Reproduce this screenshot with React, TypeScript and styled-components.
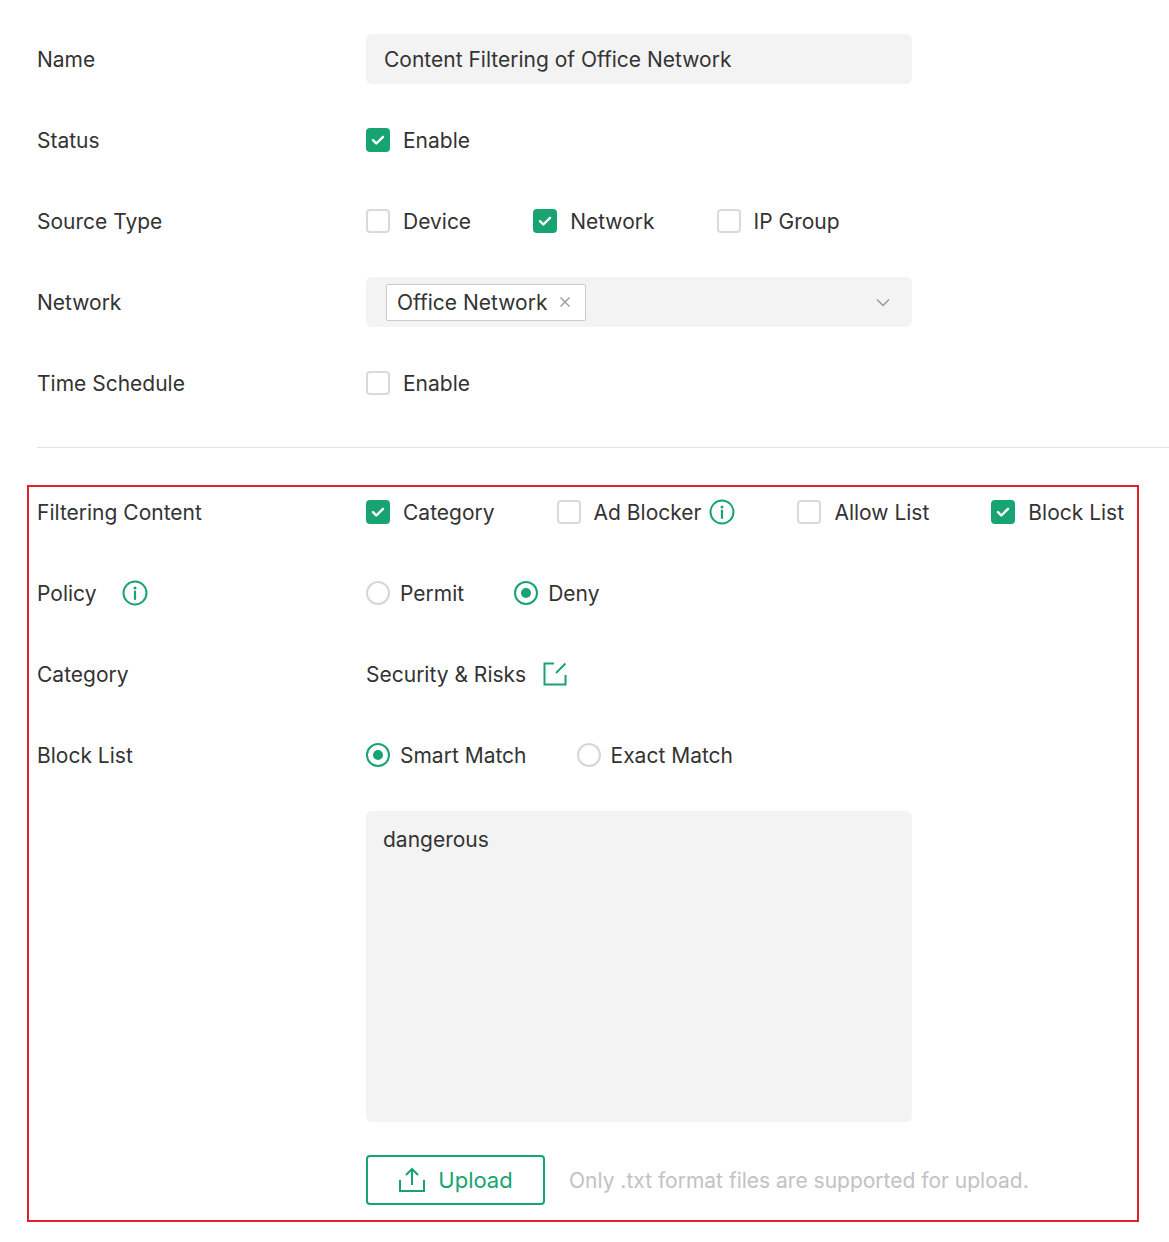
import React from "react";
import styled, { createGlobalStyle } from "styled-components";

const GREEN = "#18a470";

const Global = createGlobalStyle`
  body { margin: 0; background: #fff; font-family: Inter, "Noto Sans", sans-serif; color: #333; }
`;

const Page = styled.div`
  width: 1169px;
  padding-top: 34px;
  padding-bottom: 20px;
`;

const Rows = styled.div`
  display: flex;
  flex-direction: column;
  gap: 31px;
  padding-left: 37px;
`;

const Row = styled.div`
  display: grid;
  grid-template-columns: 329px 1fr;
  align-items: center;
  min-height: 50px;
`;

const Label = styled.div`
  font-size: 21px;
  display: flex;
  align-items: center;
  gap: 26px;
`;

const Controls = styled.div<{ $gap?: number }>`
  display: flex;
  align-items: center;
  gap: ${(p) => p.$gap ?? 62}px;
`;

const Input = styled.div`
  width: 546px;
  height: 50px;
  box-sizing: border-box;
  background: #f3f3f3;
  border-radius: 6px;
  padding: 0 18px;
  display: flex;
  align-items: center;
  font-size: 21px;
`;

const Select = styled(Input)`
  padding: 0 20px;
  justify-content: space-between;
`;

const Tag = styled.div`
  height: 37px;
  box-sizing: border-box;
  border: 1px solid #ccc;
  background: #fff;
  border-radius: 2px;
  display: flex;
  align-items: center;
  gap: 12px;
  padding: 0 14px 0 10px;
`;

const Option = styled.label`
  display: flex;
  align-items: center;
  gap: 13px;
  font-size: 21px;
`;

const Radio = styled.span<{ $on?: boolean }>`
  width: 24px;
  height: 24px;
  box-sizing: border-box;
  border-radius: 50%;
  border: 2px solid ${(p) => (p.$on ? GREEN : "#d6d6d6")};
  display: flex;
  align-items: center;
  justify-content: center;
  margin-right: -3px;
  &::after {
    content: "";
    width: 10px;
    height: 10px;
    border-radius: 50%;
    background: ${(p) => (p.$on ? GREEN : "transparent")};
  }
`;

const Box = styled.span<{ $on?: boolean }>`
  width: 24px;
  height: 24px;
  box-sizing: border-box;
  border-radius: 4px;
  background: ${(p) => (p.$on ? GREEN : "#fff")};
  border: ${(p) => (p.$on ? "none" : "2px solid #dadada")};
  display: flex;
  align-items: center;
  justify-content: center;
`;

const Divider = styled.hr`
  margin: 39px 0 37px 37px;
  border: none;
  border-top: 1px solid #e3e3e3;
`;

const Framed = styled.div`
  margin-left: 27px;
  width: 1112px;
  box-sizing: border-box;
  border: 2px solid #e0202a;
  padding: 0 0 15px 8px;
  display: flex;
  flex-direction: column;
  gap: 31px;
`;

const Indented = styled.div`
  padding-left: 329px;
`;

const TextArea = styled.div`
  width: 546px;
  height: 311px;
  box-sizing: border-box;
  background: #f3f3f3;
  border-radius: 6px;
  padding: 16px 17px;
  font-size: 21px;
`;

const UploadRow = styled.div`
  padding-left: 329px;
  margin-top: 2px;
  display: flex;
  align-items: center;
  gap: 24px;
`;

const UploadButton = styled.button`
  width: 179px;
  height: 50px;
  border: 2px solid ${GREEN};
  border-radius: 4px;
  background: #fff;
  color: ${GREEN};
  font-family: inherit;
  font-size: 22px;
  display: flex;
  align-items: center;
  justify-content: center;
  gap: 12px;
`;

const Hint = styled.span`
  color: #c2c2c2;
  font-size: 21px;
`;

const Check = ({ on }: { on?: boolean }) => (
  <Box $on={on}>
    {on && (
      <svg width="16" height="16" viewBox="0 0 16 16">
        <path d="M3 8.2l3.3 3.3L13 4.8" fill="none" stroke="#fff" strokeWidth="2.4" strokeLinecap="round" strokeLinejoin="round" />
      </svg>
    )}
  </Box>
);

const Info = () => (
  <svg width="26" height="26" viewBox="0 0 26 26">
    <circle cx="13" cy="13" r="11.5" fill="none" stroke={GREEN} strokeWidth="2" />
    <circle cx="13" cy="8" r="1.5" fill={GREEN} />
    <path d="M13 11.5v7.5" stroke={GREEN} strokeWidth="2.2" strokeLinecap="round" />
  </svg>
);

export default function App() {
  return (
    <Page>
      <Global />
      <Rows>
        <Row>
          <Label>Name</Label>
          <Input>Content Filtering of Office Network</Input>
        </Row>
        <Row>
          <Label>Status</Label>
          <Controls>
            <Option><Check on />Enable</Option>
          </Controls>
        </Row>
        <Row>
          <Label>Source Type</Label>
          <Controls>
            <Option><Check />Device</Option>
            <Option><Check on />Network</Option>
            <Option><Check />IP Group</Option>
          </Controls>
        </Row>
        <Row>
          <Label>Network</Label>
          <Select>
            <Tag>
              Office Network
              <svg width="12" height="12" viewBox="0 0 12 12">
                <path d="M1.5 1.5l9 9M10.5 1.5l-9 9" stroke="#999" strokeWidth="1.4" />
              </svg>
            </Tag>
            <svg width="18" height="18" viewBox="0 0 18 18">
              <path d="M3 6.5l6 6 6-6" fill="none" stroke="#999" strokeWidth="1.5" />
            </svg>
          </Select>
        </Row>
        <Row>
          <Label>Time Schedule</Label>
          <Controls>
            <Option><Check />Enable</Option>
          </Controls>
        </Row>
      </Rows>
      <Divider />
      <Framed>
        <Row>
          <Label>Filtering Content</Label>
          <Controls>
            <Option><Check on />Category</Option>
            <Option><Check />Ad Blocker<span style={{ marginLeft: -5, display: "flex" }}><Info /></span></Option>
            <Option><Check />Allow List</Option>
            <Option><Check on />Block List</Option>
          </Controls>
        </Row>
        <Row>
          <Label>Policy<Info /></Label>
          <Controls $gap={50}>
            <Option><Radio />Permit</Option>
            <Option><Radio $on />Deny</Option>
          </Controls>
        </Row>
        <Row>
          <Label>Category</Label>
          <Controls $gap={16}>
            <Option>Security &amp; Risks</Option>
            <svg width="26" height="26" viewBox="0 0 26 26">
              <path d="M12 2.5H2.5v21h21V14" fill="none" stroke={GREEN} strokeWidth="2" />
              <path d="M14 12L23.5 2.5" stroke={GREEN} strokeWidth="2" />
            </svg>
          </Controls>
        </Row>
        <Row>
          <Label>Block List</Label>
          <Controls $gap={50}>
            <Option><Radio $on />Smart Match</Option>
            <Option><Radio />Exact Match</Option>
          </Controls>
        </Row>
        <Indented>
          <TextArea>dangerous</TextArea>
        </Indented>
        <UploadRow>
          <UploadButton>
            <svg width="28" height="26" viewBox="0 0 28 26">
              <path d="M2 13v11h24V13" fill="none" stroke={GREEN} strokeWidth="2" />
              <path d="M14 18V2M8 8l6-6 6 6" fill="none" stroke={GREEN} strokeWidth="2" />
            </svg>
            Upload
          </UploadButton>
          <Hint>Only .txt format files are supported for upload.</Hint>
        </UploadRow>
      </Framed>
    </Page>
  );
}
